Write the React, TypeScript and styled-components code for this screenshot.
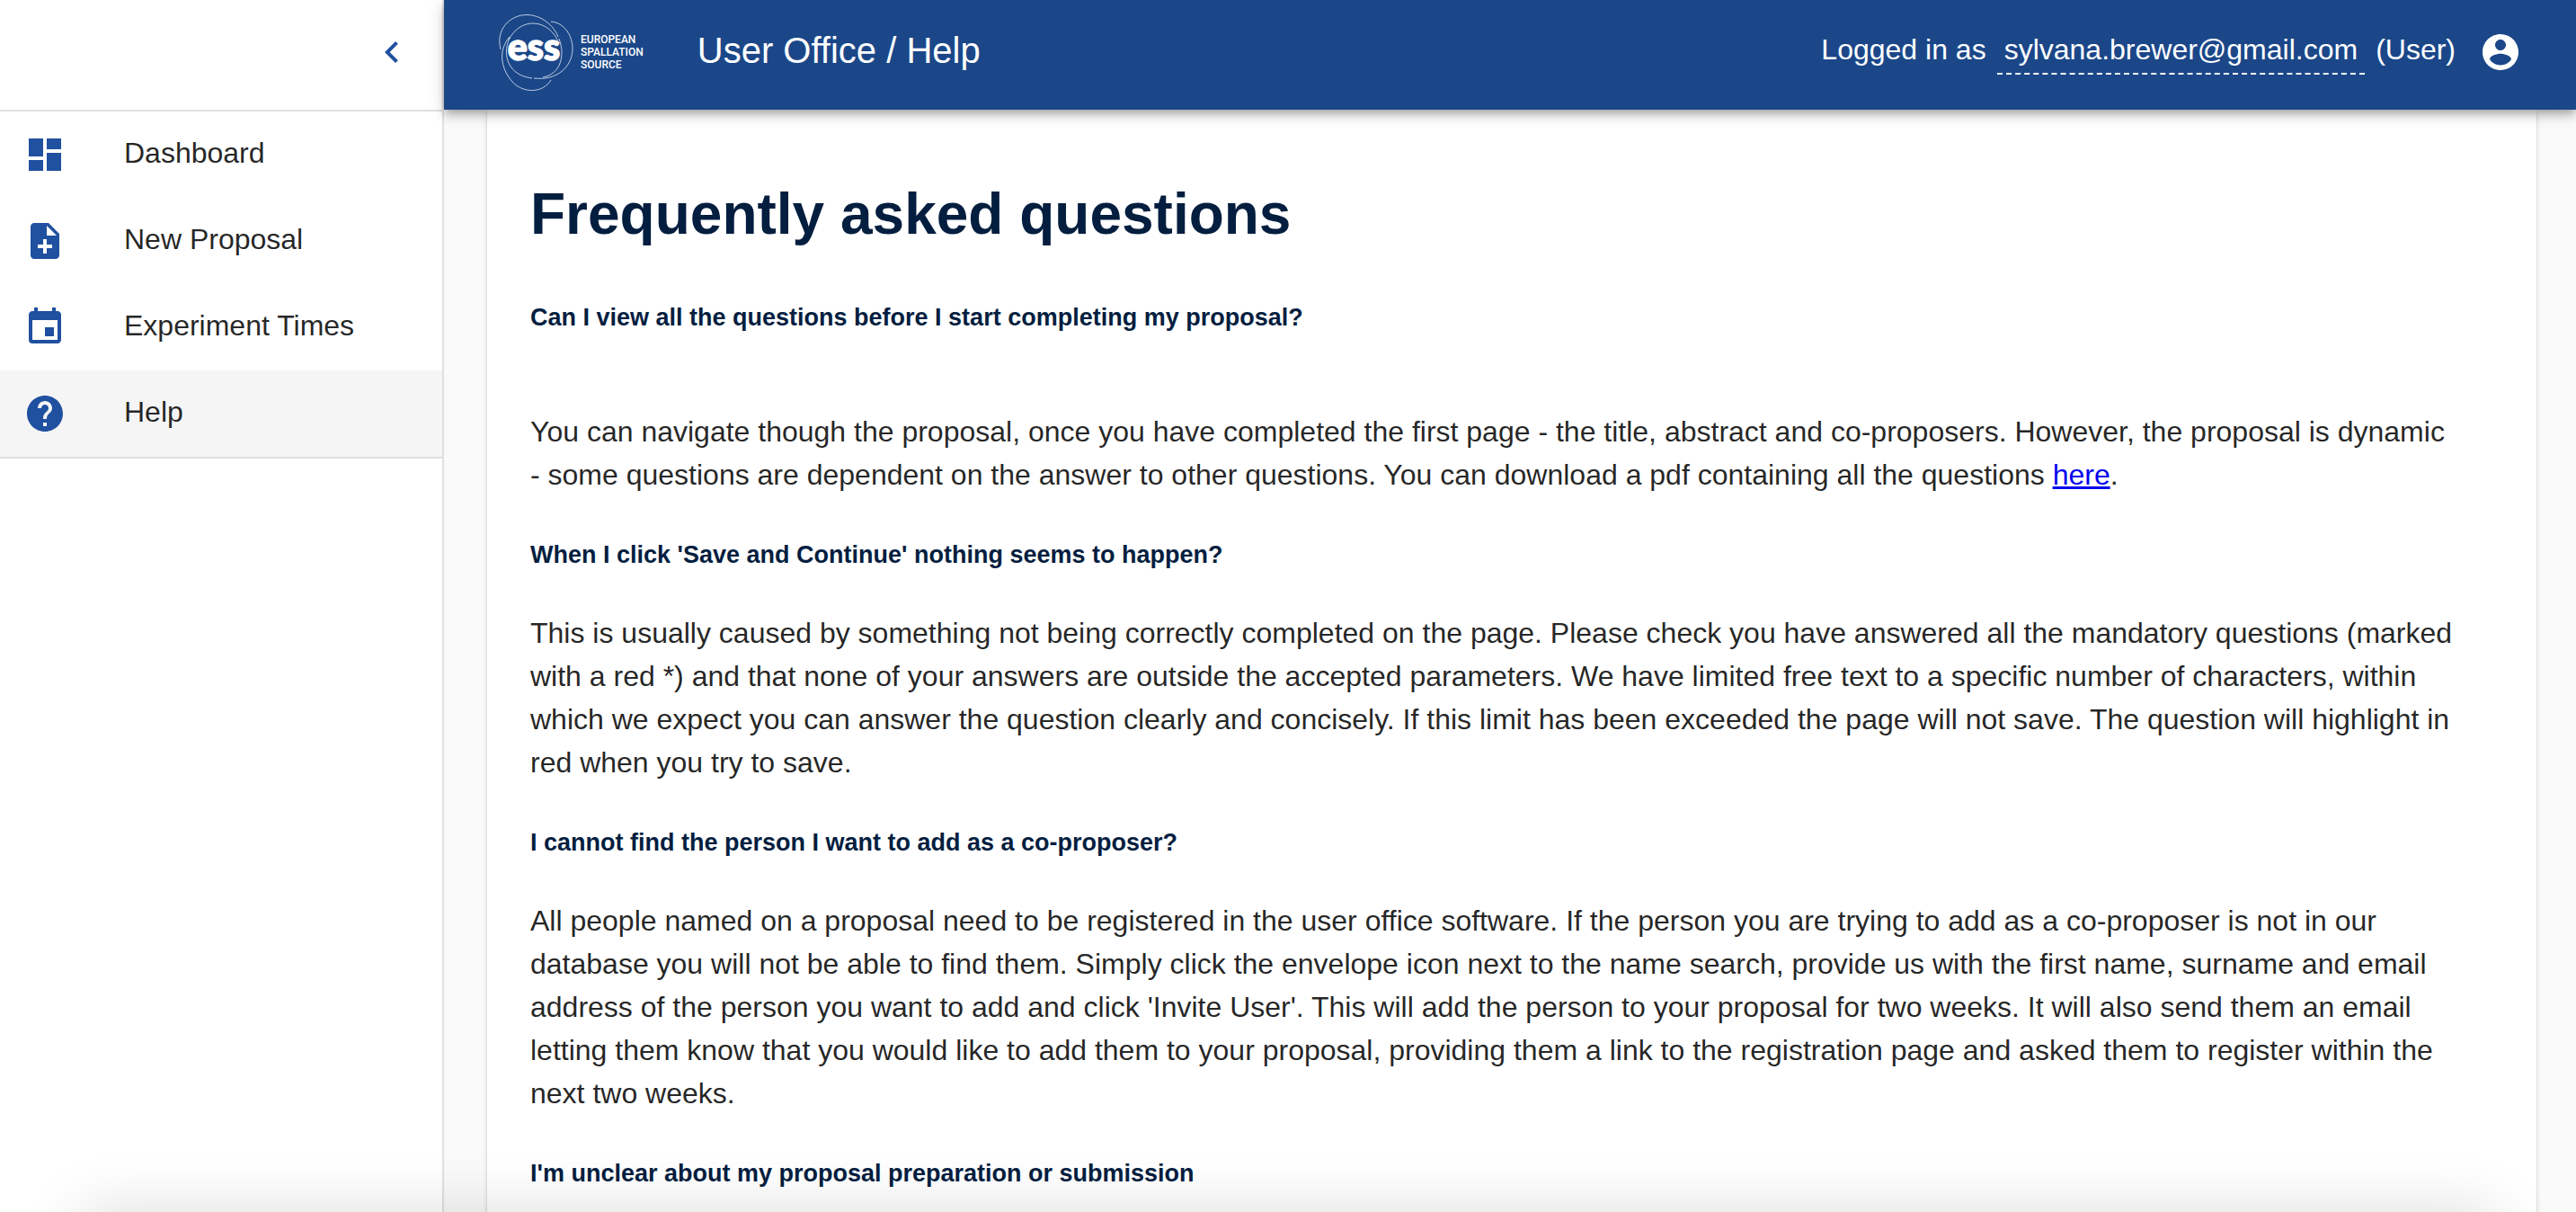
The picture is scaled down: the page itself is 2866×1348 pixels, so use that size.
import React from "react";
import styled, { createGlobalStyle } from "styled-components";
import { MdChevronLeft, MdDashboard, MdEvent, MdHelp, MdNoteAdd } from "react-icons/md";

const GlobalStyle = createGlobalStyle`
  * { box-sizing: border-box; }
  body {
    margin: 0;
    background: #fafafa;
    color: rgba(0, 0, 0, 0.87);
    font-family: Helvetica, "Liberation Sans", Arial, sans-serif;
    font-size: 32px;
    line-height: 48px;
  }
`;

const Shell = styled.div`
  display: flex;
  height: 100vh;
  overflow: hidden;
`;

const Sidebar = styled.aside`
  flex: 0 0 494px;
  background: #fff;
  border-right: 2px solid #e0e0e0;
`;

const SidebarHeader = styled.div`
  display: flex;
  align-items: center;
  justify-content: flex-end;
  height: 124px;
  padding: 0 32px 6px 0;
  border-bottom: 2px solid #e0e0e0;
`;

const IconButton = styled.button<{ $color: string }>`
  display: flex;
  padding: 0;
  border: 0;
  background: none;
  color: ${(p) => p.$color};
  font-size: 48px;
  cursor: pointer;
`;

const NavList = styled.ul`
  margin: 0;
  padding: 0;
  list-style: none;
  border-bottom: 2px solid #e0e0e0;
`;

const NavLink = styled.a<{ $active?: boolean }>`
  display: flex;
  align-items: center;
  gap: 64px;
  height: 96px;
  padding: 0 26px;
  background: ${(p) => (p.$active ? "#f5f5f5" : "transparent")};
  color: inherit;
  text-decoration: none;

  svg {
    width: 48px;
    height: 48px;
    color: #2050a0;
  }
`;

const NavLabel = styled.span`
  padding-bottom: 4px;
`;

const Content = styled.div`
  display: flex;
  flex: 1;
  flex-direction: column;
  min-width: 0;
`;

const TopBar = styled.header`
  position: relative;
  z-index: 1;
  display: flex;
  flex: none;
  align-items: center;
  height: 122px;
  padding: 0 60px 6px;
  background: #1b4789;
  color: #fff;
  box-shadow:
    0 4px 8px -2px rgba(0, 0, 0, 0.2),
    0 8px 10px 0 rgba(0, 0, 0, 0.14),
    0 2px 20px 0 rgba(0, 0, 0, 0.12);
`;

const Brand = styled.div`
  display: flex;
  flex: 0 0 160px;
  align-items: center;
  gap: 8px;
  margin-right: 60px;
  font-family: Roboto, "Open Sans", sans-serif;
`;

const BrandName = styled.div`
  display: flex;
  flex-direction: column;
  font-size: 12px;
  font-weight: 500;
  line-height: 14px;
`;

const Title = styled.h1`
  flex: 1;
  margin: 0;
  padding-bottom: 4px;
  font-size: 40px;
  font-weight: 400;
  line-height: 64px;
`;

const Account = styled.div`
  display: flex;
  align-items: center;
  gap: 26px;
`;

const AccountText = styled.div`
  display: flex;
  align-items: baseline;
  gap: 12px;
  line-height: 44px;
`;

const EmailButton = styled.button`
  padding: 0 8px 4px;
  border: 0;
  border-bottom: 2px dashed #fff;
  background: none;
  color: inherit;
  font: inherit;
  cursor: pointer;
`;

const Main = styled.main`
  flex: 1;
  min-height: 0;
  overflow-y: auto;
  scrollbar-width: none;
  padding: 0 44px 0 48px;
`;

const Paper = styled.article`
  padding: 68px 48px 48px;
  background: #fff;
  box-shadow:
    0 4px 2px -2px rgba(0, 0, 0, 0.2),
    0 2px 2px 0 rgba(0, 0, 0, 0.14),
    0 2px 6px 0 rgba(0, 0, 0, 0.12);
`;

const PageHeading = styled.h2`
  margin: 0 0 47px;
  color: #041e3f;
  font-size: 64px;
  line-height: 96px;
`;

const Question = styled.h3`
  margin: 0 0 43px;
  color: #041e3f;
  font-size: 27px;
  line-height: 40px;
`;

const Answer = styled.p`
  margin: 0 0 45px;

  a {
    color: #0000ee;
  }
`;

const NoBreak = styled.span`
  white-space: nowrap;
`;

const BottomShade = styled.div`
  position: fixed;
  z-index: 2;
  top: 100%;
  right: 90px;
  left: 90px;
  height: 200px;
  box-shadow: 0 0 70px rgba(0, 0, 0, 0.14);
  pointer-events: none;
`;

const navItems = [
  { label: "Dashboard", icon: MdDashboard },
  { label: "New Proposal", icon: MdNoteAdd },
  { label: "Experiment Times", icon: MdEvent },
  { label: "Help", icon: MdHelp, active: true },
];

const EssMark = () => (
  <svg width="84" height="88" viewBox="0 0 84 88" aria-label="ess" role="img">
    <g fill="none" stroke="#e4ebf5" strokeWidth="0.8">
      <path d="M3 41 C-3 18 14 2.500 32 2.500 C48 2.500 62 14 67 27" />
      <path d="M59 10 C74 11 83 26 83 40 C83 60 66 76 40 73" />
      <path d="M13 27 C0 42 3 62 16 77 C28 90 50 90 59 75" />
      <path d="M12 30 C19 17 30 11.500 40 12 C54 12.500 63 23 67 32" />
      <path d="M68 29 C75 48 70 68 50 72 M38 73 C12 70 4 48 13 28" />
    </g>
    <text
      x="40"
      y="53"
      textAnchor="middle"
      fontFamily="Lato, sans-serif"
      fontSize="41"
      fontWeight="900"
      fill="#fff"
      stroke="#fff"
      strokeWidth="1.5"
    >
      ess
    </text>
  </svg>
);

const ProfileIcon = () => (
  <svg width="48" height="48" viewBox="0 0 24 24" fill="currentColor" aria-hidden="true">
    <path d="M12 2C6.480 2 2 6.480 2 12s4.480 10 10 10 10-4.480 10-10S17.520 2 12 2zm0 3c1.660 0 3 1.340 3 3s-1.340 3-3 3-3-1.340-3-3 1.340-3 3-3zm0 14.200c-2.500 0-4.710-1.280-6-3.220.03-1.990 4-3.080 6-3.080 1.990 0 5.970 1.090 6 3.080-1.290 1.940-3.500 3.220-6 3.220z" />
  </svg>
);

export default function App() {
  return (
    <>
      <GlobalStyle />
      <Shell>
        <Sidebar>
          <SidebarHeader>
            <IconButton $color="#2050a0" aria-label="Close menu">
              <MdChevronLeft />
            </IconButton>
          </SidebarHeader>
          <nav>
            <NavList>
              {navItems.map(({ label, icon: Icon, active }) => (
                <li key={label}>
                  <NavLink href="#" $active={active}>
                    <Icon />
                    <NavLabel>{label}</NavLabel>
                  </NavLink>
                </li>
              ))}
            </NavList>
          </nav>
        </Sidebar>
        <Content>
          <TopBar>
            <Brand>
              <EssMark />
              <BrandName>
                <span>EUROPEAN</span>
                <span>SPALLATION</span>
                <span>SOURCE</span>
              </BrandName>
            </Brand>
            <Title>User Office / Help</Title>
            <Account>
              <AccountText>
                <span>Logged in as</span>
                <EmailButton>sylvana.brewer@gmail.com</EmailButton>
                <span>(User)</span>
              </AccountText>
              <IconButton $color="#fff" aria-label="Profile">
                <ProfileIcon />
              </IconButton>
            </Account>
          </TopBar>
          <Main>
            <Paper>
              <PageHeading>Frequently asked questions</PageHeading>
              <Question>
                Can I view all the questions before I start completing my proposal?
                <br />
                <br />
              </Question>
              <Answer>
                You can navigate though the proposal, once you have completed the first page - the
                title, abstract and co-proposers. However, the proposal is dynamic{" "}
                <NoBreak>- some</NoBreak> questions are dependent on the answer to other questions.
                You can download a pdf containing all the questions <a href="#">here</a>.
              </Answer>
              <Question>When I click 'Save and Continue' nothing seems to happen?</Question>
              <Answer>
                This is usually caused by something not being correctly completed on the page.
                Please check you have answered all the mandatory questions (marked with a red *)
                and that none of your answers are outside the accepted parameters. We have limited
                free text to a specific number of characters, within which we expect you can answer
                the question clearly and concisely. If this limit has been exceeded the page will
                not save. The question will highlight in red when you try to save.
              </Answer>
              <Question>I cannot find the person I want to add as a co-proposer?</Question>
              <Answer>
                All people named on a proposal need to be registered in the user office software.
                If the person you are trying to add as a co-proposer is not in our database you
                will not be able to find them. Simply click the envelope icon next to the name
                search, provide us with the first name, surname and email address of the person you
                want to add and click 'Invite User'. This will add the person to your proposal for
                two weeks. It will also send them an email letting them know that you would like to
                add them to your proposal, providing them a link to the registration page and asked
                them to register within the next two weeks.
              </Answer>
              <Question>I'm unclear about my proposal preparation or submission</Question>
            </Paper>
          </Main>
        </Content>
      </Shell>
      <BottomShade />
    </>
  );
}
